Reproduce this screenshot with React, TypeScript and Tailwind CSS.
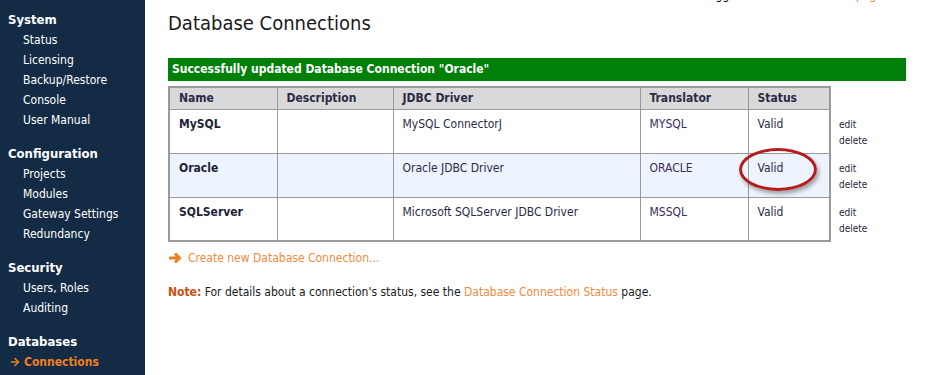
import { ArrowRight } from 'lucide-react'

type Row = { name: string; driver: string; translator: string; status: string; active?: boolean }

const nav: Array<{ title: string; items: string[] }> = [
  { title: 'System', items: ['Status', 'Licensing', 'Backup/Restore', 'Console', 'User Manual'] },
  { title: 'Configuration', items: ['Projects', 'Modules', 'Gateway Settings', 'Redundancy'] },
  { title: 'Security', items: ['Users, Roles', 'Auditing'] }
]

const rows: Row[] = [
  { name: 'MySQL', driver: 'MySQL ConnectorJ', translator: 'MYSQL', status: 'Valid' },
  { name: 'Oracle', driver: 'Oracle JDBC Driver', translator: 'ORACLE', status: 'Valid', active: true },
  { name: 'SQLServer', driver: 'Microsoft SQLServer JDBC Driver', translator: 'MSSQL', status: 'Valid' }
]

const font = { fontFamily: '"DejaVu Sans Condensed", "DejaVu Sans", sans-serif' }

function Sidebar() {
  return (
    <aside className="flex w-[145px] shrink-0 flex-col bg-[#142b45] pl-[8px] pt-[10px] text-[12px] leading-[20px] text-white">
      {nav.map((g) => (
        <div key={g.title} className="mb-[14px] flex flex-col">
          <span className="text-[13px] font-bold">{g.title}</span>
          {g.items.map((x) => (
            <span key={x} className="pl-[15px]">
              {x}
            </span>
          ))}
        </div>
      ))}
      <div className="flex flex-col">
        <span className="text-[13px] font-bold">Databases</span>
        <span className="flex items-center gap-[3px] pl-[1px] font-bold text-[#f07f1e]">
          <ArrowRight className="size-[12px]" strokeWidth={3} />
          Connections
        </span>
      </div>
    </aside>
  )
}

export default function App() {
  return (
    <div className="flex h-[375px] w-[945px] overflow-hidden bg-white" style={font}>
      <Sidebar />
      <main className="relative flex flex-1 flex-col pl-[23px] text-[12px] text-[#2b2b45]">
        <div className="absolute right-[62px] top-[-12px] text-[12px] leading-[15px]">
          <span className="text-black">Logged in</span>
          <span className="ml-[100px] text-[#f07f1e]">page</span>
        </div>
        <h1 className="mt-[10px] text-[20px] leading-[26px] text-[#1a1a1a]">Database Connections</h1>

        <div className="mt-[22px] w-[738px] bg-[#008009] px-[4px] py-[4px] text-[12px] font-bold leading-[15px] text-white">
          Successfully updated Database Connection "Oracle"
        </div>

        <div className="relative mt-[5px] flex items-start">
          <table className="border-collapse border-2 border-[#999]">
            <thead>
              <tr className="bg-[#d9d9d9] text-left text-[12px] font-bold text-[#2b2b45]">
                <th className="h-[22px] w-[108px] border border-[#999] px-[9px]">Name</th>
                <th className="w-[116px] border border-[#999] px-[9px]">Description</th>
                <th className="w-[247px] border border-[#999] px-[9px]">JDBC Driver</th>
                <th className="w-[108px] border border-[#999] px-[9px]">Translator</th>
                <th className="w-[82px] border border-[#999] px-[9px]">Status</th>
              </tr>
            </thead>
            <tbody>
              {rows.map((r) => (
                <tr key={r.name} className={r.active ? 'bg-[#edf4fd]' : 'bg-white'}>
                  <td className="h-[44px] border border-[#999] px-[9px] pb-[14px] font-bold text-[#1f1f3a]">{r.name}</td>
                  <td className="border border-[#999]" />
                  <td className="border border-[#999] px-[9px] pb-[14px]">{r.driver}</td>
                  <td className="border border-[#999] px-[9px] pb-[14px] text-[#3a2a5c]">{r.translator}</td>
                  <td className="border border-[#999] px-[9px] pb-[14px]">{r.status}</td>
                </tr>
              ))}
            </tbody>
          </table>
          <div className="ml-[8px] flex flex-col pt-[31px] text-[10px] leading-[16px] text-[#1f1f3a]">
            {rows.map((r) => (
              <div key={r.name} className="mb-[12px] flex flex-col">
                <span>edit</span>
                <span>delete</span>
              </div>
            ))}
          </div>
          <div className="absolute left-[571px] top-[62px] h-[43px] w-[78px] rounded-[50%] border-[3px] border-[#b51c1c] shadow-[2px_3px_4px_rgba(0,0,0,0.35)]" />
        </div>

        <div className="mt-0 flex items-center gap-[6px] text-[12px] text-[#f08a3c]">
          <svg width="14" height="12" viewBox="0 0 14 12" aria-hidden>
            <path d="M1 6h10M7 1.5 11.5 6 7 10.5" fill="none" stroke="#f07f1e" strokeWidth="3" />
          </svg>
          <span>Create new Database Connection...</span>
        </div>

        <p className="mt-[16px] text-[12px] text-[#1a1a1a]">
          <span className="font-bold text-[#cf4d0a]">Note:</span> For details about a connection's status, see the{' '}
          <span className="text-[#f08a3c]">Database Connection Status</span> page.
        </p>
      </main>
    </div>
  )
}
